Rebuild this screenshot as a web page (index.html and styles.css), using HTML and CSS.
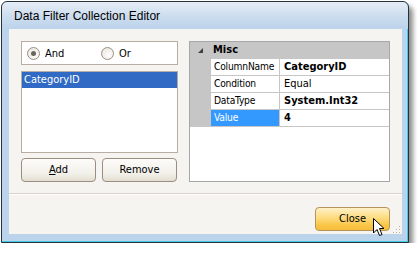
FILE: index.html
```html
<!DOCTYPE html>
<html lang="en">
	<head>
		<meta charset="utf-8">
		<link rel="stylesheet" href="styles.css">
	</head>

	<body>
		<div class='window'>
			<div class='titlebar'>Data Filter Collection Editor</div>
			<div class='client'>
				<div class='main'>
					<div class='left'>
						<div class='radios'>
							<label class='radio'><span class='dot checked'></span>And</label>
							<label class='radio'><span class='dot'></span>Or</label>
						</div>
						<div class='list'>
							<div class='item selected'>CategoryID</div>
						</div>
						<div class='buttons'>
							<span class='btn'><u>A</u>dd</span>
							<span class='btn'>Remove</span>
						</div>
					</div>

					<div class='grid'>
						<div class='row header'>
							<span class='gutter'><i class='tri'></i></span>
							<span class='cat'>Misc</span>
						</div>
						<div class='row'>
							<span class='gutter'></span>
							<span class='name'>ColumnName</span>
							<span class='value bold'>CategoryID</span>
						</div>
						<div class='row'>
							<span class='gutter'></span>
							<span class='name'>Condition</span>
							<span class='value'>Equal</span>
						</div>
						<div class='row'>
							<span class='gutter'></span>
							<span class='name'>DataType</span>
							<span class='value bold'>System.Int32</span>
						</div>
						<div class='row'>
							<span class='gutter'></span>
							<span class='name active'>Value</span>
							<span class='value bold'>4</span>
						</div>
						<div class='rest'></div>
					</div>
				</div>

				<div class='footer'>
					<span class='close'>Close
						<svg class='cursor' width="13" height="20" viewBox="0 0 13 20">
							<path d="M1.5 1.5 L1.5 16 L5 12.5 L7.5 18.5 L10 17.5 L7.5 11.5 L12 11.5 Z" fill="#fff" stroke="#000" stroke-width="1" stroke-linejoin="round"/>
						</svg>
					</span>
					<span class='grip'></span>
				</div>
			</div>
		</div>
	</body>
</html>
```

FILE: styles.css
```css
html {
	background-color: #fff;
}

body {
	margin: 0;
	font: 11px "DejaVu Sans Condensed", "Liberation Sans", sans-serif;
	color: #000;
}

.window {
	margin: 1px 0 0 1px;
	width: 406px;
	height: 240px;
	border: 1px solid #26323e;
	border-radius: 6px 6px 0 0;
	background-color: #bcd3ec;
	box-shadow: inset -1px -1px 0 #41cbe6, 4px 5px 5px rgba(0, 0, 0, 0.45);
	display: flex;
	flex-direction: column;
}

.titlebar {
	height: 27px;
	padding-left: 12px;
	font: 12px "Liberation Sans", sans-serif;
	line-height: 29px;
	border-radius: 6px 6px 0 0;
	background: linear-gradient(#e6edf6, #cbdcee 55%, #bcd3ec);
}

.client {
	margin: 0 6px 0 7px;
	height: 205px;
	background-color: #f5f4f0;
	display: flex;
	flex-direction: column;
	position: relative;
}

.main {
	display: flex;
	gap: 11px;
	padding: 12px 11px 11px 12px;
	border-bottom: 1px solid #d7d2ca;
}

.left {
	width: 157px;
	display: flex;
	flex-direction: column;
}

.radios {
	height: 22px;
	border: 1px solid #b8ada2;
	background-color: #fff;
	display: flex;
	align-items: center;
	padding-left: 5px;
}

.radio {
	display: flex;
	align-items: center;
	width: 74px;
}

.dot {
	display: inline-block;
	box-sizing: border-box;
	width: 13px;
	height: 13px;
	margin-right: 5px;
	border: 1px solid #9c8f84;
	border-radius: 50%;
	background: radial-gradient(circle at 60% 65%, #fff, #e4e0d8);
	position: relative;
}

.dot.checked::after {
	content: '';
	position: absolute;
	left: 3px;
	top: 3px;
	width: 5px;
	height: 5px;
	border-radius: 50%;
	background-color: #6b6560;
}

.list {
	margin-top: 6px;
	height: 80px;
	border: 1px solid #b8ada2;
	background-color: #fff;
}

.item {
	height: 16px;
	line-height: 16px;
	padding-left: 2px;
}

.selected {
	background-color: #316ac5;
	color: #fff;
}

.buttons {
	margin-top: 5px;
	display: flex;
	gap: 6px;
}

.btn {
	box-sizing: border-box;
	width: 75px;
	height: 24px;
	line-height: 22px;
	text-align: center;
	border: 1px solid #9b8e80;
	border-radius: 4px;
	background: linear-gradient(#fdfcfa, #f1efe8 70%, #e3ddd0);
}

.grid {
	width: 199px;
	height: 139px;
	border: 1px solid #a7a7a7;
	background-color: #fff;
	display: flex;
	flex-direction: column;
}

.row {
	display: flex;
	height: 17px;
	line-height: 16px;
}

.gutter {
	width: 21px;
	background-color: #c6c6c6;
	position: relative;
}

.header {
	background-color: #c6c6c6;
	font-weight: bold;
}

.tri {
	position: absolute;
	left: 8px;
	top: 6px;
	width: 0;
	height: 0;
	border-left: 5px solid transparent;
	border-bottom: 5px solid #404040;
}

.cat {
	padding-left: 2px;
}

.name {
	width: 65px;
	padding-left: 3px;
	border-right: 1px solid #c6c6c6;
	border-bottom: 1px solid #c6c6c6;
	white-space: nowrap;
	overflow: hidden;
	font-size: 10.2px;
	letter-spacing: -0.2px;
}

.value {
	flex: 1;
	padding-left: 4px;
	border-bottom: 1px solid #c6c6c6;
}

.bold {
	font-weight: bold;
}

.active {
	background-color: #3399ff;
	color: #fff;
}

.rest {
	flex: 1;
}

.footer {
	flex: 1;
	display: flex;
	justify-content: flex-end;
	align-items: flex-start;
	padding: 12px 12px 0 0;
	border-top: 1px solid #fff;
}

.close {
	box-sizing: border-box;
	width: 75px;
	height: 24px;
	line-height: 22px;
	text-align: center;
	border: 1px solid #b4945a;
	border-radius: 4px;
	background: linear-gradient(#fff1c8, #fddc7e 45%, #f9c445 80%, #f6bd3b);
	position: relative;
}

.cursor {
	position: absolute;
	left: 56px;
	top: 9px;
}

.grip {
	position: absolute;
	right: 2px;
	bottom: 1px;
	width: 8px;
	height: 8px;
	background: radial-gradient(circle, #b8b2a8 0.8px, transparent 1px) 0 0 / 3px 3px;
	clip-path: polygon(100% 0, 100% 100%, 0 100%);
}
```
